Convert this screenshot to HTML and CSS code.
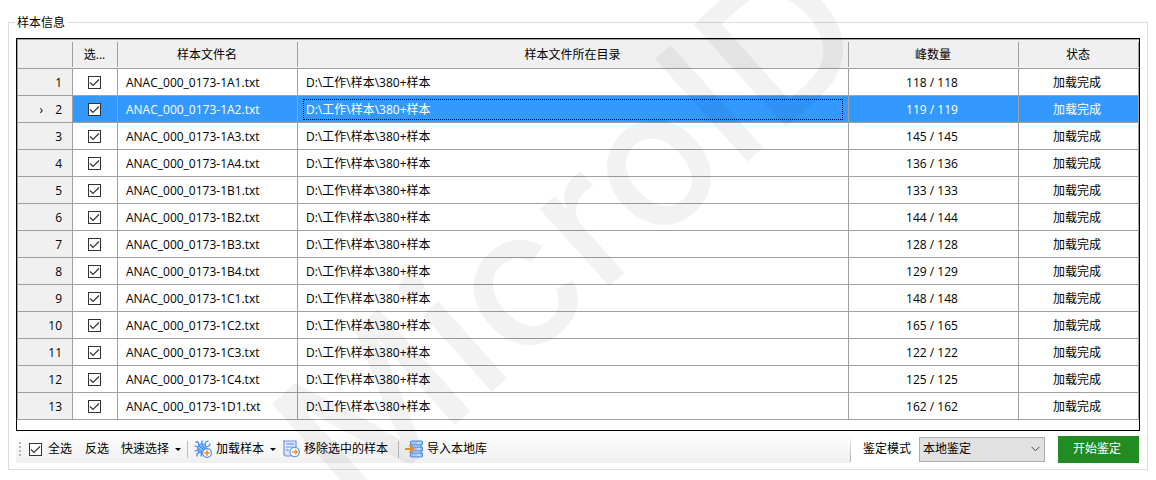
FILE: index.html
```html
<!DOCTYPE html>
<html lang="zh-CN">
<head>
  <meta charset="UTF-8">
  <title>样本信息</title>
  <link rel="stylesheet" href="styles.css">
</head>
<body>
  <fieldset class="panel">
    <legend>样本信息</legend>

    <div class="grid">
      <table>
        <colgroup>
          <col class="col-no">
          <col class="col-check">
          <col class="col-name">
          <col>
          <col class="col-peak">
          <col class="col-state">
        </colgroup>
        <thead>
          <tr><th></th><th>选...</th><th>样本文件名</th><th>样本文件所在目录</th><th>峰数量</th><th>状态</th></tr>
        </thead>
        <tbody>
          <tr><th>1</th><td><input type="checkbox" aria-label="选择 1" checked></td><td>ANAC_000_0173-1A1.txt</td><td>D:\工作\样本\380+样本</td><td>118 / 118</td><td>加载完成</td></tr>
          <tr class="selected"><th><span class="marker">›</span>2</th><td><input type="checkbox" aria-label="选择 2" checked></td><td>ANAC_000_0173-1A2.txt</td><td class="focus">D:\工作\样本\380+样本</td><td>119 / 119</td><td>加载完成</td></tr>
          <tr><th>3</th><td><input type="checkbox" aria-label="选择 3" checked></td><td>ANAC_000_0173-1A3.txt</td><td>D:\工作\样本\380+样本</td><td>145 / 145</td><td>加载完成</td></tr>
          <tr><th>4</th><td><input type="checkbox" aria-label="选择 4" checked></td><td>ANAC_000_0173-1A4.txt</td><td>D:\工作\样本\380+样本</td><td>136 / 136</td><td>加载完成</td></tr>
          <tr><th>5</th><td><input type="checkbox" aria-label="选择 5" checked></td><td>ANAC_000_0173-1B1.txt</td><td>D:\工作\样本\380+样本</td><td>133 / 133</td><td>加载完成</td></tr>
          <tr><th>6</th><td><input type="checkbox" aria-label="选择 6" checked></td><td>ANAC_000_0173-1B2.txt</td><td>D:\工作\样本\380+样本</td><td>144 / 144</td><td>加载完成</td></tr>
          <tr><th>7</th><td><input type="checkbox" aria-label="选择 7" checked></td><td>ANAC_000_0173-1B3.txt</td><td>D:\工作\样本\380+样本</td><td>128 / 128</td><td>加载完成</td></tr>
          <tr><th>8</th><td><input type="checkbox" aria-label="选择 8" checked></td><td>ANAC_000_0173-1B4.txt</td><td>D:\工作\样本\380+样本</td><td>129 / 129</td><td>加载完成</td></tr>
          <tr><th>9</th><td><input type="checkbox" aria-label="选择 9" checked></td><td>ANAC_000_0173-1C1.txt</td><td>D:\工作\样本\380+样本</td><td>148 / 148</td><td>加载完成</td></tr>
          <tr><th>10</th><td><input type="checkbox" aria-label="选择 10" checked></td><td>ANAC_000_0173-1C2.txt</td><td>D:\工作\样本\380+样本</td><td>165 / 165</td><td>加载完成</td></tr>
          <tr><th>11</th><td><input type="checkbox" aria-label="选择 11" checked></td><td>ANAC_000_0173-1C3.txt</td><td>D:\工作\样本\380+样本</td><td>122 / 122</td><td>加载完成</td></tr>
          <tr><th>12</th><td><input type="checkbox" aria-label="选择 12" checked></td><td>ANAC_000_0173-1C4.txt</td><td>D:\工作\样本\380+样本</td><td>125 / 125</td><td>加载完成</td></tr>
          <tr><th>13</th><td><input type="checkbox" aria-label="选择 13" checked></td><td>ANAC_000_0173-1D1.txt</td><td>D:\工作\样本\380+样本</td><td>162 / 162</td><td>加载完成</td></tr>
        </tbody>
      </table>
    </div>

    <div class="footer">
      <div class="toolbar">
        <span class="grip"></span>
        <label class="check-all"><input type="checkbox" checked>全选</label>
        <button type="button" class="tool">反选</button>
        <button type="button" class="tool">快速选择<span class="arrow"></span></button>
        <span class="sep"></span>
        <button type="button" class="tool icon-tool">
          <svg class="icon" viewBox="0 0 18 18" fill="none">
            <g stroke="#3f8bf8" stroke-width="1.3" stroke-linecap="round" stroke-linejoin="round">
              <path d="M5 5L4 2 2 2M8 4l0-3M11 5l1-3 2-1M12 7l3-1 1-2M4 7L1 6M4 10l-3 1M5 12l-2 2 0 2M8 13l-1 3"/>
              <ellipse cx="8" cy="8.500" rx="4.200" ry="4.600" fill="#b5d6ff"/>
              <path d="M5.500 6l5 5M5 9l3 3M8 5.500l3 3"/>
            </g>
            <circle cx="13" cy="13" r="4.400" fill="#fff" stroke="#4a8cf5" stroke-width="1.200"/>
            <path d="M13 10.300v5.400M10.300 13h5.400" stroke="#ff8c1a" stroke-width="1.700"/>
          </svg>加载样本<span class="arrow"></span>
        </button>
        <button type="button" class="tool icon-tool">
          <svg class="icon" viewBox="0 0 18 18" fill="none">
            <path d="M1 1h13v8M9 16H4a2 2 0 0 1-2-2V1" fill="#dbe5ff" stroke="#6f8df6" stroke-width="1.200"/>
            <path d="M4 4h8M4 7h7M4 10h3" stroke="#5b82f4" stroke-width="1.200"/>
            <circle cx="12.700" cy="12" r="4.700" fill="#fff" stroke="#5a9af9" stroke-width="1.300"/>
            <path d="M10 12h5M13 9.800l2.200 2.200-2.200 2.200" stroke="#ff8c1a" stroke-width="1.300"/>
          </svg>移除选中的样本
        </button>
        <span class="sep"></span>
        <button type="button" class="tool icon-tool">
          <svg class="icon" viewBox="0 0 18 18" fill="none">
            <path d="M7 4v10M16 4v10" stroke="#4a90ee" stroke-width="1.200"/>
            <g fill="#a6d0ff" stroke="#4a90ee" stroke-width="1.200">
              <rect x="5.500" y="1" width="12" height="4" rx="1.500"/>
              <rect x="5.500" y="7" width="12" height="4" rx="1.500"/>
              <rect x="5.500" y="13" width="12" height="4" rx="1.500"/>
            </g>
            <path d="M12 3h3M12 9h3M12 15h3" stroke="#fff" stroke-width="1.200"/>
            <path d="M0 9h8M4.500 5l4 4-4 4" stroke="#f5952a" stroke-width="1.800"/>
          </svg>导入本地库
        </button>
      </div>
      <label class="mode-label" for="mode">鉴定模式</label>
      <select id="mode" class="mode">
        <option>本地鉴定</option>
      </select>
      <button type="button" class="start">开始鉴定</button>
    </div>
  </fieldset>

  <svg class="watermark" viewBox="0 0 1156 480" aria-hidden="true">
    <text transform="translate(353 517) rotate(-42)">MicroID</text>
  </svg>
</body>
</html>
```
FILE: styles.css
```css
body {
  margin: 0;
  position: relative;
  overflow: hidden;
  background: #fff;
  color: #000;
  font: 12px/16px "Open Sans", "Noto Sans CJK SC", sans-serif;
}
button, select, input {
  font: inherit;
  color: inherit;
  margin: 0;
}
.panel {
  margin: 13px 8px 10px;
  padding: 7px 7px 6px;
  border: 1px solid #dcdcdc;
  min-width: 0;
}
.panel legend {
  margin-left: -1px;
  padding: 2px 2px 0;
}

/* 样本表格 */
.grid {
  border: 1px solid #000;
  padding-bottom: 10px;
}
table {
  width: 100%;
  table-layout: fixed;
  border-collapse: separate;
  border-spacing: 0;
  border: solid #a0a0a0;
  border-width: 1px 0 0 1px;
}
.col-no { width: 55px; }
.col-check { width: 45px; }
.col-name { width: 180px; }
.col-peak { width: 170px; }
.col-state { width: 120px; }
th, td {
  box-sizing: border-box;
  height: 27px;
  padding: 2px 8px 0;
  border: solid #a0a0a0;
  border-width: 0 1px 1px 0;
  font-weight: normal;
  text-align: left;
  white-space: nowrap;
}
th {
  background: #f0f0f0;
}
thead th {
  height: 29px;
  padding: 2px 2px 0 0;
  text-align: center;
  border-right: 0;
  background: linear-gradient(#a0a0a0, #a0a0a0) right 0 top 2px / 1px 25px no-repeat #f0f0f0;
}
tbody th {
  padding-right: 10px;
  text-align: right;
}
td:nth-child(2) {
  padding: 0 2px 0 0;
}
td:nth-child(5), td:nth-child(6) {
  padding: 2px 3px 0 0;
  text-align: center;
}
.marker {
  margin-right: 12px;
}
.selected td {
  background: #3399ff;
  color: #fff;
}
.focus {
  position: relative;
}
.focus::after {
  content: "";
  position: absolute;
  inset: 3px 5px 2px;
  border: 1px dotted #000;
}
input[type="checkbox"] {
  appearance: none;
  display: block;
  width: 13px;
  height: 13px;
  margin: 0 auto;
  border: 1px solid #333;
  background: #fff;
}
input[type="checkbox"]:checked {
  background-image: url("data:image/svg+xml,%3Csvg xmlns='http://www.w3.org/2000/svg' viewBox='0 0 11 11'%3E%3Cpath d='M1 5.500l3 3L10 2.500' fill='none' stroke='%23333' stroke-width='1.200'/%3E%3C/svg%3E");
}

/* 底部工具栏 */
.footer {
  display: flex;
  align-items: center;
  height: 28px;
  margin-top: 4px;
  padding-right: 1px;
}
.toolbar {
  flex: 1;
  display: flex;
  align-items: center;
  height: 28px;
  border-radius: 3px;
  background:
    linear-gradient(#fff0, #aaa) right / 1px 100% no-repeat,
    linear-gradient(#fdfdfd, #f0f0f0);
}
.grip {
  width: 2px;
  height: 14px;
  margin: 0 8px 0 3px;
  background: repeating-linear-gradient(#b4b4b4 0 2px, #fff0 2px 4px);
}
.check-all {
  display: flex;
  align-items: center;
  gap: 6px;
  margin-right: 7px;
}
.tool {
  display: flex;
  align-items: center;
  padding: 0 6px;
  border: 0;
  background: none;
}
.icon-tool {
  padding-right: 0;
}
.arrow {
  margin-left: 6px;
  border: 3px solid #fff0;
  border-top-color: #000;
  border-bottom: 0;
}
.sep {
  width: 1px;
  height: 17px;
  background: #bdbdbd;
}
.icon-tool + .sep {
  margin-left: 10px;
}
.icon {
  width: 18px;
  height: 18px;
  margin-right: 4px;
}
.mode-label {
  margin: 0 8px 0 12px;
}
.mode {
  appearance: none;
  width: 126px;
  height: 25px;
  padding: 0 3px;
  border: 1px solid #adadad;
  border-radius: 0;
  background: url("data:image/svg+xml,%3Csvg xmlns='http://www.w3.org/2000/svg' viewBox='0 0 9 6'%3E%3Cpath d='M.5.8l4 4 4-4' fill='none' stroke='%23444'/%3E%3C/svg%3E") right 4px center / 9px 6px no-repeat #e1e1e1;
}
.start {
  width: 81px;
  height: 27px;
  margin-left: 13px;
  padding: 0 3px 0 0;
  border: 0;
  background: #228b22;
  color: #fff;
}

/* 水印 */
.watermark {
  position: absolute;
  top: 0;
  left: 0;
  width: 100%;
  pointer-events: none;
}
.watermark text {
  font: 500 190px Inter, sans-serif;
  fill: #000;
  fill-opacity: 0.05;
}
```
